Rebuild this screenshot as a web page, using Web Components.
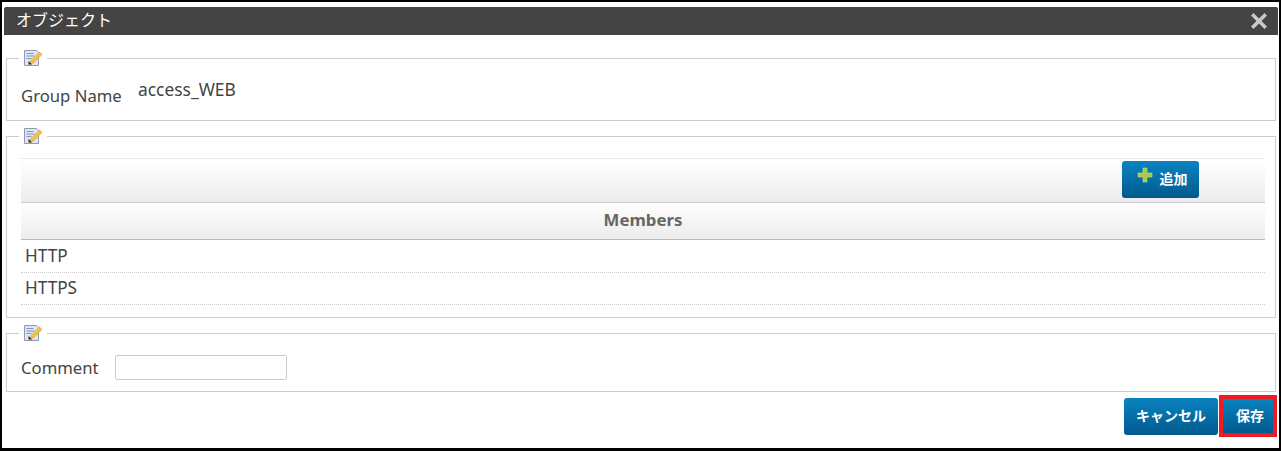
<!DOCTYPE html>
<html lang="ja">
<head>
<meta charset="utf-8">
<title>オブジェクト</title>
<style>
html,body{margin:0;padding:0;background:#fff;}
body{font-family:"Noto Sans","Noto Sans CJK JP",sans-serif;color:#444;}
</style>
</head>
<body>
<object-dialog heading="オブジェクト">
  <form-group>
    <div style="display:flex;height:53px">
      <span style="font-size:16.7px;line-height:22px;margin:18px 0 0 0;width:117px">Group Name</span>
      <span style="font-size:17.4px;line-height:22px;margin:11px 0 0 0">access_WEB</span>
    </div>
  </form-group>
  <form-group style="margin-top:6px">
    <member-table>
      <member-row>HTTP</member-row>
      <member-row>HTTPS</member-row>
    </member-table>
  </form-group>
  <form-group style="margin-top:6px">
    <comment-field></comment-field>
  </form-group>
</object-dialog>

<script>
const NOTE_ICON = `
<svg width="20" height="18" viewBox="0 0 20 18">
  <path d="M1.5 1.5h12l2 2v13h-14z" fill="#dfe6f2" stroke="#8d9ab5"/>
  <path d="M3.5 4.5h7M3.5 7h8M3.5 9.5h5" stroke="#7f95c0" stroke-width="1"/>
  <path d="M8 11.5 16.5 3l2.5 2.5-8.5 8.5-3.5 1z" fill="#f4c24a" stroke="#d49a20" stroke-width=".6"/>
  <path d="M5.5 12v3.5h3.5z" fill="#222"/>
</svg>`;

class formGroup extends HTMLElement {
  constructor() {
    super();
    this.attachShadow({ mode: 'open' });
    this.shadowRoot.innerHTML = `
<style>
:host{display:block;}
fieldset{margin:0;padding:0 10px 0 14px;border:1px solid #ccc;min-width:0;}
legend{margin:0 0 0 -2px;padding:0 4px 0 4px;height:18px;line-height:0;}
svg{display:block;}
</style>
<fieldset>
<legend>${NOTE_ICON}</legend>
<slot></slot>
</fieldset>
`;
  }
}
customElements.define('form-group', formGroup);

class blueButton extends HTMLElement {
  constructor() {
    super();
    this.attachShadow({ mode: 'open' });
    this.shadowRoot.innerHTML = `
<style>
:host{display:inline-block;}
button{display:flex;align-items:center;justify-content:center;box-sizing:border-box;width:100%;height:100%;margin:0;padding:0 0 3px;border:0;border-radius:var(--btn-radius,3px);
background:linear-gradient(#0a83c0,#015a8e);color:#fff;font:bold 14px "Noto Sans CJK JP","Noto Sans",sans-serif;}
</style>
<button type="button"><slot></slot></button>
`;
  }
}
customElements.define('blue-button', blueButton);

class memberRow extends HTMLElement {
  constructor() {
    super();
    this.attachShadow({ mode: 'open' });
    this.shadowRoot.innerHTML = `
<style>
:host{display:block;box-sizing:border-box;height:32px;padding:0 4px;line-height:30px;font-size:17.2px;color:#444;border-bottom:1px dotted #ccc;}
</style>
<slot></slot>
`;
  }
}
customElements.define('member-row', memberRow);

class memberTable extends HTMLElement {
  constructor() {
    super();
    this.attachShadow({ mode: 'open' });
    this.shadowRoot.innerHTML = `
<style>
:host{display:block;padding:13px 0 12px;}
.bar{display:flex;justify-content:flex-end;box-sizing:border-box;height:44px;padding:2px 66px 0 0;
border-top:1px solid #e8e8e8;background:linear-gradient(#fff,#ececec);}
blue-button{width:77px;height:37px;}
.add{display:flex;align-items:flex-start;padding-left:3px;}
.add svg{margin:-2px 7px 0 0;}
.add span{margin-top:-1px;}
.head{box-sizing:border-box;height:38px;border-top:1px solid #ccc;border-bottom:1px solid #bbb;
background:linear-gradient(#fff,#ececec);text-align:center;font-weight:bold;font-size:16.8px;line-height:34px;color:#666;}
.rows{padding-top:1px;}
</style>
<div class="bar">
<blue-button>
<div class="add">
<svg width="16" height="16" viewBox="0 0 16 16"><path d="M6 1h4v5h5v4h-5v5H6v-5H1V6h5z" fill="#a8c94c" stroke="#c9dc7a" stroke-width=".6"/></svg>
<span>追加</span>
</div>
</blue-button>
</div>
<div class="head">Members</div>
<div class="rows"><slot></slot></div>
`;
  }
}
customElements.define('member-table', memberTable);

class commentField extends HTMLElement {
  constructor() {
    super();
    this.attachShadow({ mode: 'open' });
    this.shadowRoot.innerHTML = `
<style>
:host{display:flex;align-items:center;height:47px;padding-top:2px;font-size:16.7px;color:#444;}
label{width:94px;}
input{box-sizing:border-box;width:172px;height:25px;margin:0;border:1px solid #ccc;border-radius:2px;background:#fff;}
</style>
<label>Comment</label><input type="text">
`;
  }
}
customElements.define('comment-field', commentField);

class objectDialog extends HTMLElement {
  constructor() {
    super();
    this.attachShadow({ mode: 'open' });
  }
  getTemplate() {
    const template = document.createElement('template');
    template.innerHTML = `
<div class="shell">
<header>
<h1>${this.getAttribute('heading')}</h1>
<svg class="close" width="18" height="18" viewBox="0 0 18 18"><path d="M3.5 1 9 6.5 14.5 1 17 3.5 11.5 9 17 14.5 14.5 17 9 11.5 3.5 17 1 14.5 6.5 9 1 3.5z" fill="#c9c9c9"/></svg>
</header>
<div class="body"><slot></slot></div>
<footer>
<blue-button style="width:94px;height:37px">キャンセル</blue-button>
<blue-button class="save" style="width:50px;height:34px"><span style="padding-left:4px">保存</span></blue-button>
</footer>
</div>
${this.getStyle()}
`;
    return template;
  }
  getStyle() {
    return `
<style>
:host{display:block;}
.shell{box-sizing:border-box;height:451px;padding:5px 2px 0 2px;border:2px solid #000;border-bottom-width:3px;}
header{display:flex;align-items:center;justify-content:space-between;box-sizing:border-box;height:28px;margin:0 -1px 0 0;padding:0 10px 5px 12px;background:#444;border-radius:2px 2px 0 0;}
h1{margin:0;font:400 16px "Noto Sans CJK JP",sans-serif;color:#fff;}
.close{position:relative;top:2px;}
.body{padding:14px 1px 0 2px;}
footer{display:flex;justify-content:flex-end;align-items:flex-start;gap:5px;padding:6px 4px 0 0;}
.save{--btn-radius:0;margin-top:1px;outline:4px solid #ed1c24;}
</style>
`;
  }
  connectedCallback() {
    this.shadowRoot.appendChild(this.getTemplate().content.cloneNode(true));
  }
}
customElements.define('object-dialog', objectDialog);
</script>
</body>
</html>
